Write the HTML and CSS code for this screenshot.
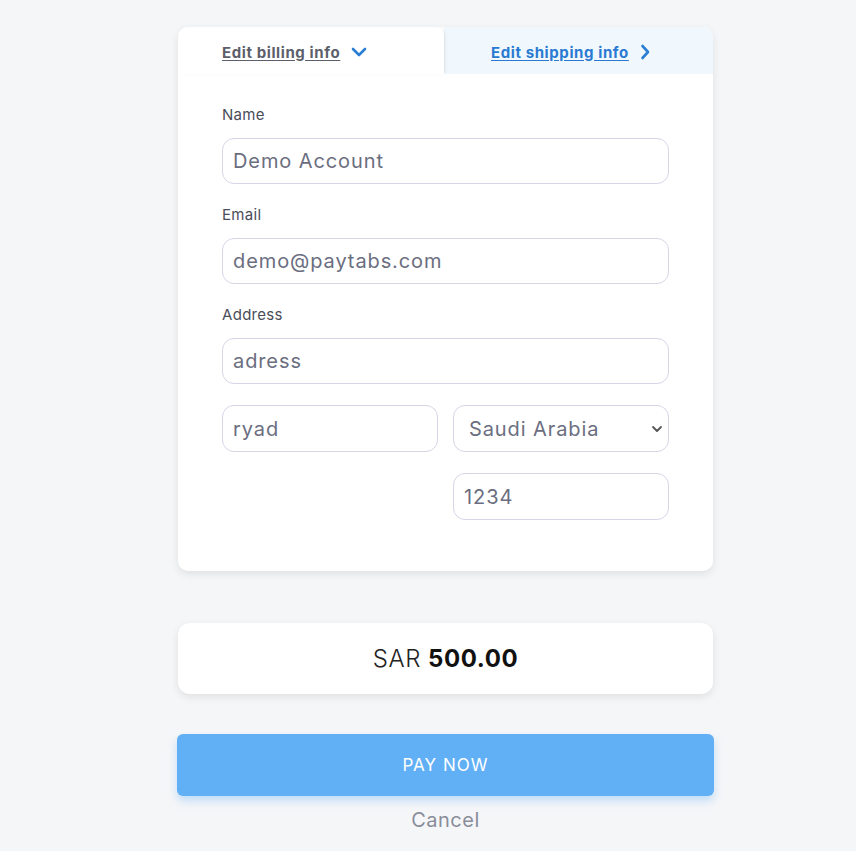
FILE: index.html
```html
<!DOCTYPE html>
<html>
<head>
<meta charset="utf-8">
<link rel="stylesheet" href="styles.css">
</head>
<body>
<div class="page">
  <div class="card">
    <div class="tabs">
      <a class="tab tab-active" href="#"><span class="tab-text">Edit billing info</span>
        <svg class="chev" width="16" height="10" viewBox="0 0 16 10"><path d="M2 2 L8 8 L14 2" fill="none" stroke="#2b7fd3" stroke-width="2.6" stroke-linecap="round" stroke-linejoin="round"/></svg>
      </a>
      <a class="tab tab-other" href="#"><span class="tab-text">Edit shipping info</span>
        <svg class="chev" width="10" height="16" viewBox="0 0 10 16"><path d="M2.5 2 L8 8 L2.5 14" fill="none" stroke="#2b7fd3" stroke-width="2.6" stroke-linecap="round" stroke-linejoin="round"/></svg>
      </a>
    </div>
    <div class="body">
      <div class="field">
        <label class="label">Name</label>
        <input class="input" type="text" value="Demo Account">
      </div>
      <div class="field">
        <label class="label">Email</label>
        <input class="input" type="text" value="demo@paytabs.com">
      </div>
      <div class="field">
        <label class="label">Address</label>
        <input class="input" type="text" value="adress">
      </div>
      <div class="row">
        <input class="input" type="text" value="ryad">
        <div class="select">
          <span>Saudi Arabia</span>
          <svg width="12" height="8" viewBox="0 0 12 8"><path d="M2 2 L6 6 L10 2" fill="none" stroke="#555" stroke-width="1.8" stroke-linecap="round" stroke-linejoin="round"/></svg>
        </div>
      </div>
      <div class="row">
        <div></div>
        <input class="input zip" type="text" value="1234">
      </div>
    </div>
  </div>
  <div class="amount"><span class="cur">SAR</span> <b>500.00</b></div>
  <button class="pay">PAY NOW</button>
  <div class="cancel">Cancel</div>
</div>
</body>
</html>
```
FILE: styles.css
```css
html, body { margin: 0; padding: 0; }
body {
  background: #f5f6f8;
  font-family: Inter, "Open Sans", sans-serif;
  color: #4a4d5a;
}
.page {
  width: 535px;
  margin-left: 178px;
  padding-top: 27px;
  display: flex;
  flex-direction: column;
}
.card {
  background: #fff;
  border-radius: 10px;
  box-shadow: 0 3px 8px rgba(0,0,0,0.09);
  overflow: hidden;
}
.tabs {
  display: flex;
  height: 47px;
}
.tab {
  flex: 1;
  display: flex;
  align-items: center;
  gap: 11px;
  padding-top: 3px;
  box-sizing: border-box;
  font-size: 15px;
  font-weight: 700;
  letter-spacing: 0.6px;
  text-decoration: none;
}
.tab-text { text-decoration: underline; text-underline-offset: 2px; }
.tab-active {
  background: #fff;
  color: #5c5f6b;
  padding-left: 44px;
  border-top-right-radius: 8px;
  box-shadow: 2px 0 3px -1px rgba(0,0,0,0.10);
  position: relative;
  z-index: 1;
}
.tab-other {
  background: #f0f8fe;
  color: #2a7ad2;
  padding-left: 47px;
}
.body {
  padding: 31px 44px 51px;
  display: flex;
  flex-direction: column;
  gap: 21px;
}
.field { display: flex; flex-direction: column; gap: 13px; }
.label { font-size: 15px; line-height: 20px; letter-spacing: 0.3px; color: #4a4d5a; }
.input, .select {
  box-sizing: border-box;
  height: 46px;
  width: 100%;
  border: 1px solid #d7d5e6;
  border-radius: 12px;
  padding: 0 10px;
  font-family: inherit;
  font-size: 20px;
  letter-spacing: 0.9px;
  color: #6b6e80;
  background: #fff;
  outline: none;
}
.row {
  display: grid;
  grid-template-columns: 1fr 1fr;
  gap: 15px;
}
.row .input, .row .select { height: 47px; }
.select {
  display: flex;
  align-items: center;
  justify-content: space-between;
  padding: 0 5px 0 15px;
}
.amount {
  margin-top: 52px;
  height: 71px;
  background: #fff;
  border-radius: 12px;
  box-shadow: 0 3px 8px rgba(0,0,0,0.09);
  display: flex;
  align-items: center;
  justify-content: center;
  font-size: 24px;
  letter-spacing: 0.6px;
  color: #222;
  gap: 7px;
}
.cur { font-weight: 300; }
.amount b { font-weight: 700; color: #111; }
.pay {
  margin-top: 40px;
  margin-left: -1px;
  width: 537px;
  height: 62px;
  border: none;
  border-radius: 6px;
  background: #61aff5;
  color: #fff;
  font-family: inherit;
  font-size: 17px;
  letter-spacing: 1px;
  box-shadow: 0 5px 8px rgba(97,175,245,0.35);
}
.cancel {
  margin-top: 12px;
  text-align: center;
  font-size: 20px;
  letter-spacing: 0.5px;
  color: #8a8d9a;
}
```
